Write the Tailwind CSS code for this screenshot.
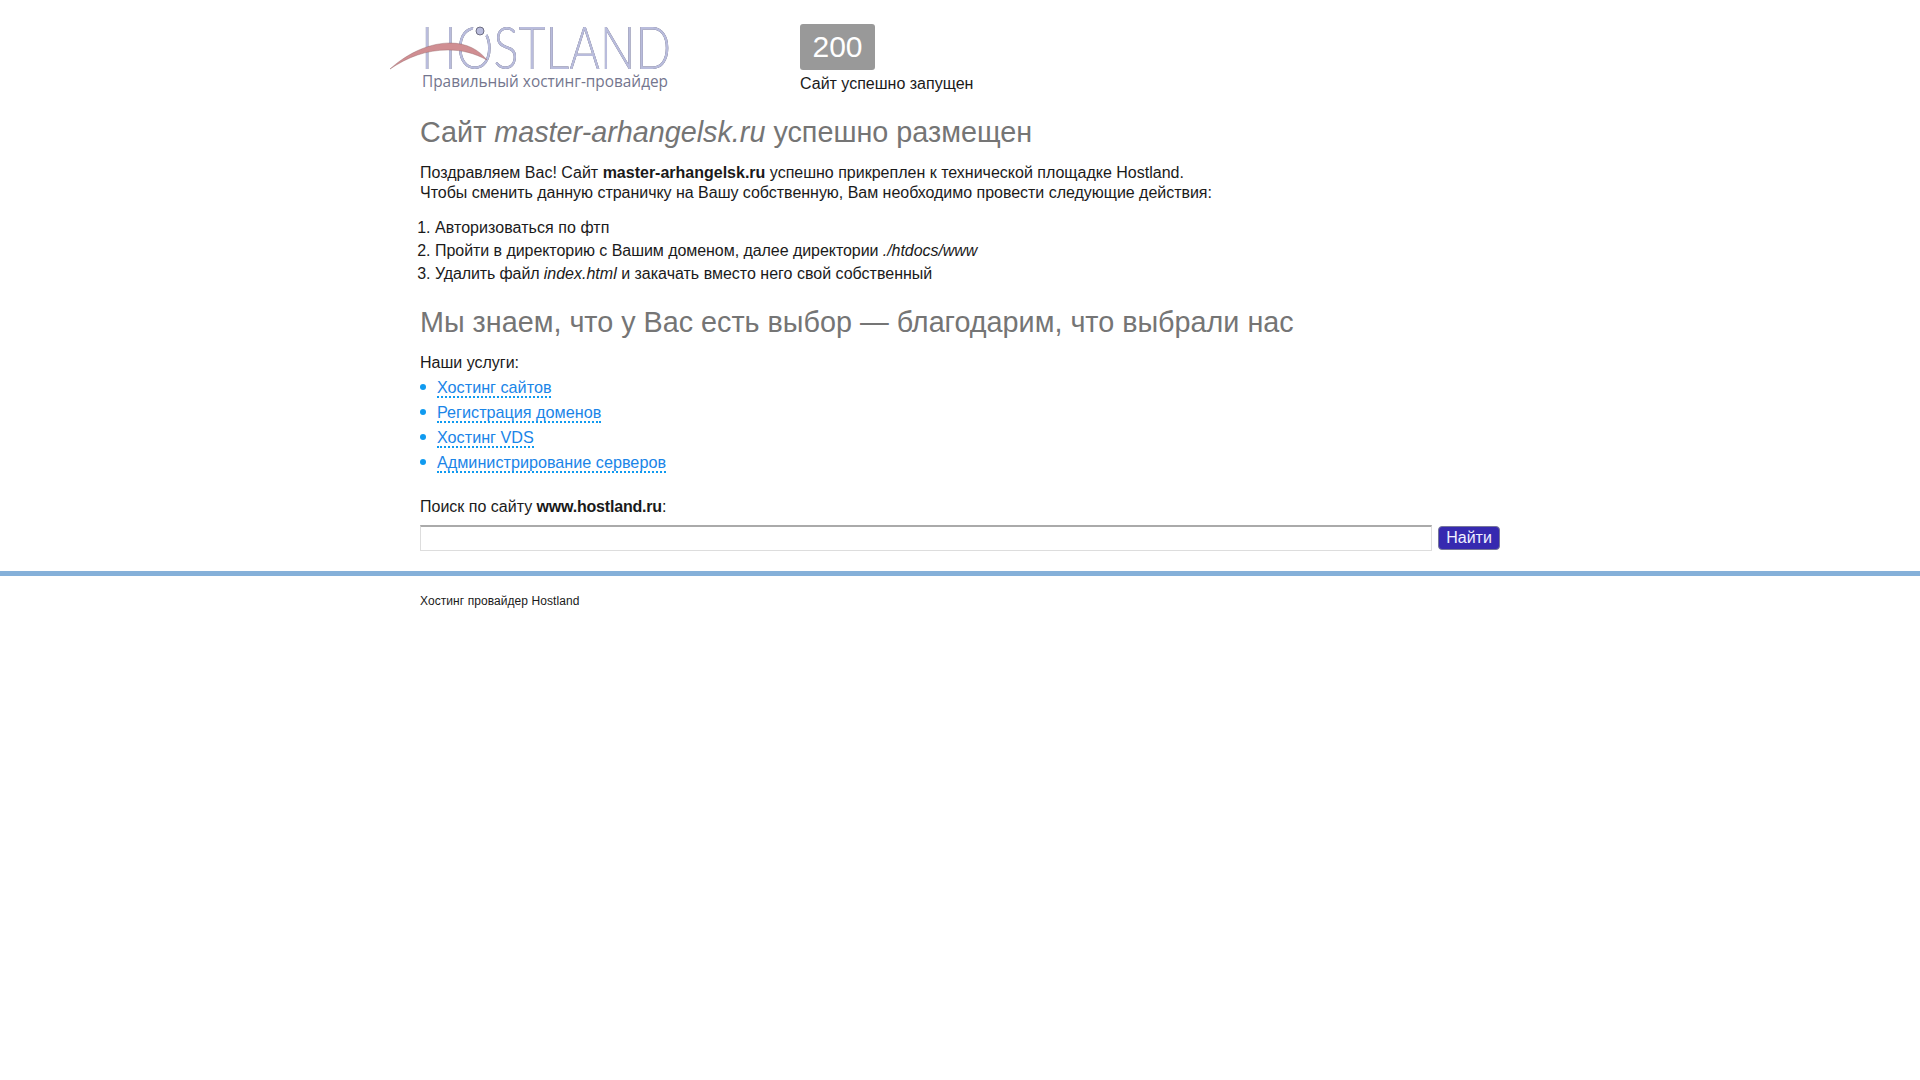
<!DOCTYPE html>
<html lang="ru">
<head>
    <meta charset="UTF-8">
    <title>Hostland</title>
    <script src="https://cdn.jsdelivr.net/npm/@tailwindcss/browser@4"></script>
</head>
<body class="bg-white text-[16px] leading-[20px] text-[#1a1a1a] font-['Liberation_Sans',Arial,sans-serif]">
    <div class="w-[1090px] ml-[420px]">
        <!-- Header -->
        <div class="flex h-[104px]">
            <svg class="w-[380px] h-[104px] -ml-[36px] shrink-0" viewBox="0 0 380 104">
                <text x="37" y="69" fill="#b9bcdc" font-family="Lato, 'Open Sans', sans-serif" font-weight="300" font-size="59" textLength="250" lengthAdjust="spacingAndGlyphs" class="[filter:drop-shadow(0.6px_0.4px_0_#55566a)]">HOSTLAND</text>
                <path d="M6 69 C26 51 48 43 66 43 C83 43 95 50 103 60 C90 53 78 50 64 50 C42 50 24 57 6 69 Z" fill="#d08e92" stroke="#8f6062" stroke-width="0.4"/>
                <circle cx="96" cy="31" r="7.5" fill="#ffffff"/>
                <circle cx="96" cy="31" r="4" fill="#b9bcdc" stroke="#55566a" stroke-width="0.8"/>
                <text x="38" y="87" fill="#74768e" font-family="'Open Sans', sans-serif" font-size="16" textLength="246" lengthAdjust="spacingAndGlyphs">Правильный хостинг-провайдер</text>
            </svg>
            <div class="ml-[36px] pt-[24px]">
                <div class="w-[75px] h-[46px] bg-[#999999] rounded-[3px] text-white text-[30px] leading-[46px] text-center">200</div>
                <p class="mt-[4px]">Сайт успешно запущен</p>
            </div>
        </div>

        <h1 class="mt-[12px] text-[28.75px] leading-[33px] text-[#757575]">Сайт <em>master-arhangelsk.ru</em> успешно размещен</h1>

        <p class="mt-[14px]">Поздравляем Вас! Сайт <b>master-arhangelsk.ru</b> успешно прикреплен к технической площадке Hostland.<br><span class="tracking-[-0.026px]">Чтобы сменить данную страничку на Вашу собственную, Вам необходимо провести следующие действия:</span></p>

        <ol class="mt-[13px] pl-[15px] list-decimal leading-[23px]">
            <li><span class="tracking-[0.06px]">Авторизоваться по фтп</span></li>
            <li><span class="tracking-[-0.055px]">Пройти в директорию с Вашим доменом, далее директории <em>./htdocs/www</em></span></li>
            <li><span class="tracking-[-0.12px]">Удалить файл </span><em>index.html</em><span> и закачать вместо него свой собственный</span></li>
        </ol>

        <h2 class="mt-[21px] text-[28.75px] leading-[33px] text-[#757575]">Мы знаем, что у Вас есть выбор — благодарим, что выбрали нас</h2>

        <p class="mt-[14px]">Наши услуги:</p>

        <ul class="mt-[2px] flex flex-col">
            <li class="h-[25px] flex items-center gap-[11px]"><span class="w-[6px] h-[6px] rounded-full bg-[#0f9af0] -mt-[2px]"></span><a class="text-[16.2px] text-[#1a85e8] border-b-2 border-dotted border-[#0f9af0] leading-[18px]" href="#">Хостинг сайтов</a></li>
            <li class="h-[25px] flex items-center gap-[11px]"><span class="w-[6px] h-[6px] rounded-full bg-[#0f9af0] -mt-[2px]"></span><a class="text-[16.2px] text-[#1a85e8] border-b-2 border-dotted border-[#0f9af0] leading-[18px]" href="#">Регистрация доменов</a></li>
            <li class="h-[25px] flex items-center gap-[11px]"><span class="w-[6px] h-[6px] rounded-full bg-[#0f9af0] -mt-[2px]"></span><a class="text-[16.2px] text-[#1a85e8] border-b-2 border-dotted border-[#0f9af0] leading-[18px]" href="#">Хостинг VDS</a></li>
            <li class="h-[25px] flex items-center gap-[11px]"><span class="w-[6px] h-[6px] rounded-full bg-[#0f9af0] -mt-[2px]"></span><a class="text-[16.2px] text-[#1a85e8] border-b-2 border-dotted border-[#0f9af0] leading-[18px]" href="#">Администрирование серверов</a></li>
        </ul>

        <p class="mt-[22px]">Поиск по сайту <b class="tracking-[-0.2px]">www.hostland.ru</b>:</p>

        <!-- Search -->
        <div class="mt-[8px] flex items-center gap-[6px]">
            <input type="text" class="w-[1012px] h-[26px] bg-white border border-[#dddddd] border-t-2 border-t-[#aaaaaa] outline-none">
            <button class="w-[62px] h-[24px] rounded-[4px] bg-[#3629b0] border border-[#77779a] text-[#f0f0ff] text-[16px] leading-[20px]">Найти</button>
        </div>
    </div>

    <div class="mt-[20px] h-[5px] bg-[#85b0d9]"></div>

    <p class="ml-[420px] mt-[18px] text-[12px] leading-[14px] tracking-[0.07px]">Хостинг провайдер Hostland</p>
</body>
</html>
